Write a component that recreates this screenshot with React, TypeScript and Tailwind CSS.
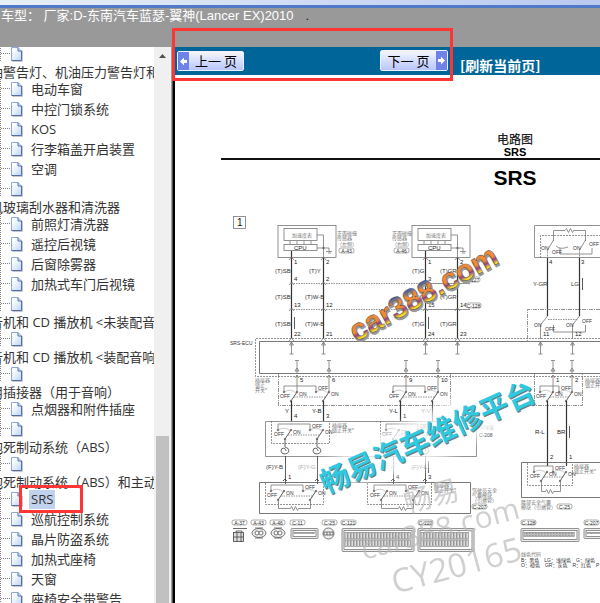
import clsx from 'clsx';

type Node = { label: string; group?: boolean; selected?: boolean };

const nodes: Node[] = [
    { label: '油警告灯、机油压力警告灯和', group: true },
    { label: '电动车窗' },
    { label: '中控门锁系统' },
    { label: 'KOS' },
    { label: '行李箱盖开启装置' },
    { label: '空调' },
    { label: '风玻璃刮水器和清洗器', group: true },
    { label: '前照灯清洗器' },
    { label: '遥控后视镜' },
    { label: '后窗除雾器' },
    { label: '加热式车门后视镜' },
    { label: '音机和 CD 播放机 <未装配音', group: true },
    { label: '音机和 CD 播放机 <装配音响', group: true },
    { label: '用插接器（用于音响）', group: true },
    { label: '点烟器和附件插座' },
    { label: '抱死制动系统（ABS）', group: true },
    { label: '抱死制动系统（ABS）和主动', group: true },
    { label: 'SRS', selected: true },
    { label: '巡航控制系统' },
    { label: '晶片防盗系统' },
    { label: '加热式座椅' },
    { label: '天窗' },
    { label: '座椅安全带警告' },
];

function PageIcon() {
    return (
        <svg width="24" height="20" viewBox="0 0 24 20" className="block shrink-0" aria-hidden="true">
            <defs>
                <linearGradient id="sheet" x1="0" y1="0" x2="1" y2="1">
                    <stop offset="0.2" stopColor="#fff" />
                    <stop offset="1" stopColor="#bcd6f5" />
                </linearGradient>
            </defs>
            <path d="M0.5 0V20M1 9.5H11" stroke="#808080" strokeDasharray="1 1" />
            <path d="M12.500 17.5H22.5V7" fill="none" stroke="#c8c8c8" />
            <path d="M11.5 3.5H18L21.5 7V16.5H11.5Z" fill="url(#sheet)" stroke="#8fa9dc" />
            <path d="M18 3.5V7H21.5V16.5H11.5" fill="none" stroke="#536db0" />
        </svg>
    );
}

function TreeItem({ node }: { node: Node }) {
    if (node.group) {
        return (
            <li className="h-[35px]">
                <div className="h-[18px] overflow-hidden"><PageIcon /></div>
                <a href="#" className="-ml-[10px] block h-[17px] leading-[20px]">{node.label}</a>
            </li>
        );
    }
    return (
        <li className="relative flex h-5 items-center">
            <PageIcon />
            <a href="#" className={clsx('ml-[5px] px-[2px] leading-[19px]', node.selected && 'bg-[#c1d2ee]')}>
                {node.label}
            </a>
            {node.selected && (
                <div className="pointer-events-none absolute -top-1 left-[19px] z-10 h-7 w-16 border-3 border-[#fc3535]" />
            )}
        </li>
    );
}

function T({ x, y, s = 6, c = '#777', children }: { x: number; y: number; s?: number; c?: string; children: string }) {
    return <text x={x} y={y} fontSize={s} fill={c} stroke="none">{children}</text>;
}

function Pill({ x, y, w = 15, children }: { x: number; y: number; w?: number; children: string }) {
    return (
        <g>
            <rect x={x} y={y - 5} width={w} height="5" rx="2" fill="#fff" strokeWidth="0.6" />
            <text x={x + w / 2} y={y - 0.5} fontSize="5" fill="#333" stroke="none" textAnchor="middle">{children}</text>
        </g>
    );
}

// pair of ganged contacts, x/y is the first pivot
function Switches({ x, y, gap = 32 }: { x: number; y: number; gap?: number }) {
    return (
        <g>
            {[x, x + gap].map((px) => (
                <g key={px}>
                    <path d={`M${px} ${y}L${px + 6} ${y - 9}`} stroke="#333" />
                    <path d={`M${px - 7} ${y - 9}Q${px} ${y - 13} ${px + 5} ${y - 8}`} strokeWidth="0.4" />
                    <circle cx={px} cy={y} r="0.8" fill="#222" />
                    <circle cx={px + 6} cy={y - 9} r="0.8" fill="#222" />
                    <circle cx={px - 7} cy={y - 9} r="0.8" fill="#222" />
                    <T x={px + 8} y={y - 5} s={5} c="#333">ON</T>
                </g>
            ))}
            <path d={`M${x - 7} ${y - 9}v-6h${gap}v6`} />
            <path d={`M${x + 3} ${y - 4}h${gap}`} strokeDasharray="1.5 1" />
            <T x={x - 11} y={y - 3} s={5} c="#333">OFF</T>
            <T x={x + gap - 5} y={y - 11} s={5} c="#333">OFF</T>
        </g>
    );
}

function Sensor({ x, pins }: { x: number; pins: string[][] }) {
    return (
        <g>
            <rect x={x} y="225.5" width="58" height="32" />
            <rect x={x + 6} y="228.5" width="33" height="12" />
            <rect x={x + 6} y="244.5" width="33" height="6" />
            <path d={`M${x + 12} 241v3M${x + 19} 241v3M${x + 26} 241v3M${x + 33} 241v3`} />
            <path d={`M${x + 39} 235h6.500V258M${x + 39} 248h12v3M${x + 48} 251.500h6M${x + 50} 253h3`} />
            <circle cx={x + 45.5} cy="248" r="0.8" fill="#222" />
            <T x={x + 14} y={237} s={5}>加速度表</T>
            <T x={x + 16} y={250} s={6} c="#222">CPU</T>
            <path d={`M${x + 13.5} 251V338M${x + 45.5} 258V338`} stroke="#333" strokeWidth="1.2" />
            <path d={`M${x + 13} 283.500H470M${x + 13} 309.500H470`} strokeDasharray="1.5 1" />
            {pins.map((row, i) => {
                const y = [264, 281, 307, 336][i];
                return (
                    <g key={i}>
                        <T x={x + 16} y={y} c="#222">{row[0]}</T>
                        <T x={x + 48} y={y} c="#222">{row[1]}</T>
                    </g>
                );
            })}
            {[258, 283, 309, 339].map((y) => (
                <path key={y} d={`M${x + 11} ${y + 2}l2.500 -3l2.500 3M${x + 43} ${y + 2}l2.500 -3l2.500 3`} />
            ))}
        </g>
    );
}

function Plug({ x, w, h, rows = 2 }: { x: number; w: number; h: number; rows?: number }) {
    const cols = Array.from({ length: Math.floor((w - 6) / 3) }, (_, i) => x + 3 + i * 3);
    return (
        <g stroke="#777">
            <rect x={x} y="528.5" width={w} height={h} rx="1" fill="#eee" />
            <rect x={x + 2} y="530.5" width={w - 4} height={h - 4} fill="#fff" />
            {Array.from({ length: rows }, (_, r) => {
                const rh = (h - 8) / rows;
                return cols.map((cx) => (
                    <rect key={`${r}-${cx}`} x={cx} y={532.5 + r * rh} width="2.500" height={rh - 1} strokeWidth="0.6" fill="#ddd" />
                ));
            })}
        </g>
    );
}

function CircuitDiagram() {
    return (
        <svg viewBox="175 75 425 528" className="block w-full font-['Liberation_Sans','Noto_Sans_CJK_SC',sans-serif]" role="img" aria-label="SRS 电路图">
            <defs>
                <linearGradient id="rainbow" x1="0" y1="0" x2="0" y2="1">
                    <stop offset="0.2" stopColor="#2f62b0" />
                    <stop offset="0.38" stopColor="#f18a35" />
                    <stop offset="0.56" stopColor="#f18a35" />
                    <stop offset="0.66" stopColor="#914086" />
                    <stop offset="0.78" stopColor="#f6dc1d" />
                </linearGradient>
                <filter id="fade" x="-20%" y="-20%" width="140%" height="140%">
                    <feGaussianBlur stdDeviation="5" />
                </filter>
            </defs>
            <text x="515" y="144" fontSize="12" fontWeight="500" textAnchor="middle" fill="#222">电路图</text>
            <text x="515" y="156" fontSize="11" fontWeight="bold" textAnchor="middle">SRS</text>
            <path d="M221 159H600" stroke="#111" strokeWidth="2" />
            <text x="515" y="185" fontSize="21" fontWeight="bold" textAnchor="middle">SRS</text>

            <g fill="none" stroke="#777" strokeWidth="0.8">
                <rect x="233.5" y="216.500" width="12" height="12" />
                <T x={237} y={226} s={10} c="#111">1</T>

                <Sensor x={278} pins={[['1', '2'], ['4', '2'], ['13', '12'], ['22', '21']]} />
                <Sensor x={412} pins={[['1', '2'], ['3', '1'], ['15', '14'], ['24', '23']]} />
                {[[338, '左侧', 'A-43'], [393, '右侧', 'A-46']].map(([x, side, code]) => (
                    <g key={code}>
                        <T x={+x - 1} y={235} s={5}>正面碰撞</T>
                        <T x={+x - 1} y={240} s={5}>传感器</T>
                        <T x={+x - 1} y={246} s={5}>{`（${side}）`}</T>
                        <Pill x={+x + 1} y={253}>{String(code)}</Pill>
                    </g>
                ))}
                {[273, 299, 326].map((y, i) => (
                    <g key={y}>
                        <T x={275} y={y} c="#333">(T)SB</T>
                        <T x={i ? 305 : 309} y={y} c="#333">{i ? '(T)W-B' : '(T)Y'}</T>
                        <T x={412} y={y} c="#333">(T)G</T>
                        <T x={440} y={y} c="#333">(T)GR</T>
                    </g>
                ))}
                <path d="M294.500 317v12M428.500 317v12M582.500 278v12M569.500 426v12M428.500 461v12" stroke="#333" />
                <Pill x={465} y={282}>C-127</Pill>
                <Pill x={466} y={308}>C-128</Pill>

                {/* right hand igniter */}
                <path d="M600 225.500H534.500V257.500H600" />
                <path d="M540.500 258V235.500H600M547.500 251.500V258M579.500 251.500V258" strokeDasharray="2 1" />
                <path d="M553.500 241V230.500H565l1.500 -2l2 4l2 -4l2 4l1 -2H585.500V241M560 248v6h32v-6" />
                <path d="M547 251L553.500 240M579 251L585.500 240M556 246Q560 250 568 247" />
                <T x={541} y={250} s={5} c="#333">ON</T>
                <T x={573} y={250} s={5} c="#333">ON</T>
                <T x={552} y={254} s={5} c="#333">OFF</T>
                <T x={589} y={246} s={5} c="#333">OFF</T>
                <path d="M547.500 258V316M579.500 258V316" stroke="#333" strokeWidth="1.200" />
                <T x={549} y={264} c="#222">4</T>
                <T x={581} y={264} c="#222">3</T>
                <T x={533} y={286} c="#333">Y-GR</T>
                <T x={571} y={286} c="#333">LG</T>
                <path d="M600 309.500H527.500V341" strokeDasharray="4 1 1 1" />
                <path d="M540.500 325L547.500 316M572.500 325L579.500 316M540.500 325V339M572.500 325V339M553.500 325v7h32v-7" />
                <path d="M548 319.500H577" strokeDasharray="1.500 1" />
                <T x={534} y={327} s={5} c="#333">ON</T>
                <T x={566} y={327} s={5} c="#333">ON</T>
                <T x={545} y={331} s={5} c="#333">OFF</T>
                <T x={582} y={323} s={5} c="#333">OFF</T>
                <T x={543} y={336} c="#222">11</T>
                <T x={575} y={336} c="#222">12</T>

                {/* ECU */}
                <T x={230} y={345} s={5} c="#333">SRS-ECU</T>
                <path d="M600 338.500H255.500V376.500H600" strokeDasharray="2 1" />
                <path d="M600 341.500H259.500V373.500H600" stroke="#555" />
                {[291, 323, 425, 457, 540, 572].map((x) => (
                    <path key={x} d={`M${x}.500 341V354m-2 0h4m-4 -9l2 -3l2 3z`} />
                ))}
                {[297, 329, 406, 438, 553, 572].map((x, i) => (
                    <g key={x}>
                        <path d={`M${x - 2} 360.500h4m-2 0V373m-2 -2l2 -3l2 3zM${x - 2} 378l2 -3l2 3M${x} 375V392`} />
                        <T x={x + 3} y={382} c="#222">{['5', '6', '9', '10', '1', '2'][i]}</T>
                    </g>
                ))}

                {/* connector lock switches under the ECU */}
                <path d="M278.500 374V405.500H450.500V374M534.500 374V405.500H582.500V374" strokeDasharray="4 1 1 1" />
                <Switches x={291} y={401} />
                <Switches x={400} y={401} />
                <Switches x={547} y={401} gap={19} />
                <path d="M291.500 401V421M323.500 401V421M400.500 401V421M432.500 401V421M547.500 401V466M566.500 401V466" stroke="#333" strokeWidth="1.200" />
                <T x={255} y={382} s={5}>插接器</T>
                <T x={255} y={387} s={5}>锁止</T>
                <T x={255} y={392} s={5}>开关*</T>
                <T x={585} y={382} s={5}>插接器</T>
                <T x={585} y={387} s={5}>锁止开关</T>
                <T x={285} y={413} c="#222">Y</T>
                <T x={312} y={413} c="#222">Y-B</T>
                <T x={389} y={413} c="#222">Y-L</T>
                <T x={421} y={413} c="#999">Y-V</T>
                <T x={294} y={418} c="#222">4</T>
                <T x={326} y={418} c="#222">3</T>
                <T x={403} y={418} c="#222">1</T>

                {/* clock spring */}
                <path d="M265.500 421.500H476.500V456.500H265.500Z" />
                <path d="M271.500 421V443.500H329.500V421M380.500 421V443.500H438.500V421" strokeDasharray="2 1" />
                <Switches x={285} y={439} />
                <Switches x={393} y={439} />
                {[285, 317, 393, 425].map((x) => (
                    <g key={x}>
                        <path d={`M${x} 439V447q4 1 4 4q-1 3 -4 3q-4 0 -4 -3q0 -3 3 -3q2 1 2 3`} stroke="#444" />
                        <path d={`M${x}.500 456V484M${x - 2} 481l2 -2l2 2`} stroke="#333" />
                    </g>
                ))}
                <T x={332} y={427} s={5}>插接器</T>
                <T x={332} y={432} s={5}>锁止开关*</T>
                <T x={479} y={429} s={5} c="#bbb">钟弹簧</T>
                <T x={479} y={437} s={5} c="#333">C-208</T>
                <T x={266} y={469} c="#333">(F)Y-B</T>
                <T x={298} y={469} c="#aaa">(F)Y-G</T>
                <T x={378} y={469} c="#aaa">(F)Y-R</T>
                <T x={411} y={469} c="#555">(F)Y-L</T>
                <T x={288} y={479} c="#222">1</T>
                <T x={396} y={479} c="#222">4</T>
                <T x={428} y={479} c="#222">3</T>

                {/* driver air bag module */}
                <path d="M259.500 482.500H470.500V513.500H259.500Z" stroke="#555" />
                <path d="M265.500 483V504.500H323.500V483M367.500 483V504.500H431.500V483" strokeDasharray="2 1" />
                <Switches x={278} y={500} />
                <Switches x={381} y={500} />
                <path d="M278.500 500V508.500h12l1 -2l2 4l2 -4l2 4l1 -2H310.500V500" />
                <path d="M381.500 500V508.500h17l1 -2l2 4l2 -4l2 4l1 -2H413.500V500" />
                <T x={434} y={487} s={5}>插接器</T>
                <T x={434} y={492} s={5}>锁止开关*</T>
                <T x={472} y={492} s={5}>驾驶员安全</T>
                <T x={472} y={497} s={5}>气囊模块</T>
                <T x={472} y={502} s={5}>（引燃管）</T>
                <Pill x={472} y={509}>C-207</Pill>

                {/* waist air bag module */}
                <T x={535} y={434} c="#222">R-L</T>
                <T x={557} y={434} c="#222">BR</T>
                <T x={550} y={459} c="#222">2</T>
                <T x={569} y={459} c="#222">1</T>
                <path d="M600 462.500H521.500V497.500H600" stroke="#555" />
                <path d="M527.500 463V485.500H572.500V463" strokeDasharray="2 1" />
                <Switches x={541} y={481} gap={19} />
                <path d="M541.500 481V491.500h4l1 -2l2 4l2 -4l2 4l1 -2H560.500V481" />
                <T x={574} y={468} s={5}>插接器</T>
                <T x={574} y={473} s={5}>锁止开关*</T>
                <T x={521} y={504} s={5}>腰部安全气囊</T>
                <T x={521} y={509} s={5}>模块（引燃管）</T>
                <Pill x={557} y={509}>C-25</Pill>

                {/* connectors */}
                {[[232, 'A-37'], [251, 'A-43'], [270, 'A-46'], [290, 'C-11'], [322, 'C-25'], [341, 'C-121'], [418, 'C-122'], [521, 'C-128'], [584, 'C-207']].map(([x, code]) => (
                    <Pill key={code} x={+x} y={525}>{String(code)}</Pill>
                ))}
                <path d="M233 528.500h14M236 533v-2h6v2" stroke="#444" />
                <rect x="233.500" y="532.500" width="10" height="9" fill="#ddd" stroke="#444" />
                <path d="M233 537h11M237 533v9M241 533v9" stroke="#444" />
                {[259, 278].map((x) => (
                    <g key={x} stroke="#555">
                        <ellipse cx={x} cy="533" rx="7" ry="4.500" fill="#eee" />
                        <path d={`M${x - 4} 528h8M${x - 4} 538h8`} />
                        <circle cx={x - 2} cy="533" r="2" fill="#fff" />
                        <circle cx={x + 2} cy="533" r="2" fill="#fff" />
                    </g>
                ))}
                <Plug x={291} w={27} h={10} rows={1} />
                <circle cx="328.500" cy="533.500" r="5.500" fill="#eee" stroke="#555" />
                <path d="M324 532h9v3h-9zM327 532v3M330 532v3" stroke="#555" />
                <Plug x={342} w={72} h={23} />
                <Plug x={418} w={56} h={23} />
                <Plug x={521} w={58} h={13} />
                <Plug x={584} w={30} h={10} rows={1} />
                <T x={521} y={556} s={5}>线色代码</T>
                <T x={521} y={562} s={5} c="#333">B：黑色　LG：浅绿色　G：绿色　L</T>
                <T x={521} y={567} s={5} c="#333">O：橙色　GR：灰色　R：红色　P</T>
            </g>

            {/* watermarks */}
            <path d="M320 464L470 390L520 385L520 405L470 445L420 470L330 490Z" fill="#fff" opacity="0.75" filter="url(#fade)" />
            <g fill="#b8b8b8" opacity="0.65" className="font-['Open_Sans','Noto_Sans_CJK_SC',sans-serif]">
                <text fontSize="28" transform="translate(407 513) rotate(-15)">畅易</text>
                <text fontSize="30" transform="translate(364 560) rotate(-15)">car388.com</text>
                <text fontSize="33" transform="translate(395 594) rotate(-15)">CY20165</text>
            </g>
            <g fontWeight="bold" fontSize="30" strokeLinejoin="round">
                <text fill="#999" stroke="#999" transform="translate(357 344) rotate(-29)">car388.com</text>
                <text fill="url(#rainbow)" stroke="#444" strokeWidth="0.400" transform="translate(356 342) rotate(-29)">car388.com</text>
            </g>
            <g fontWeight="bold" fontSize="29">
                <text fill="#777" transform="translate(327 495) rotate(-24)">畅易汽车维修平台</text>
                <text fill="#2fc9e2" transform="translate(326 494) rotate(-24)">畅易汽车维修平台</text>
            </g>
        </svg>
    );
}

function Arrow({ left }: { left?: boolean }) {
    return (
        <span className="flex w-[11px] shrink-0 items-center justify-center self-stretch bg-[#6f82e8]">
            <svg width="9" height="9" viewBox="0 0 9 9" className={clsx(left && 'rotate-180')} aria-hidden="true">
                <path d="M1 3h3V0.500L8 4.500L4 8.500V6H1z" fill="#fff" />
            </svg>
        </span>
    );
}

export default function App() {
    return (
        <div className="flex h-screen flex-col overflow-hidden bg-white font-['Open_Sans','Noto_Sans_CJK_SC',sans-serif] text-[13px] text-[#333]">
            <div className="h-[5px] shrink-0 bg-linear-to-r from-[#e8effb] to-[#b9c9ef]" />
            <div className="h-[3px] shrink-0 bg-[#5079c8]" />
            <header className="h-[39px] shrink-0 overflow-hidden bg-[#999] pl-px font-['Liberation_Sans','Noto_Sans_CJK_SC',sans-serif] leading-4 whitespace-pre text-white">
                车型： 厂家:D-东南汽车蓝瑟-翼神(Lancer EX)2010<span className="ml-3 text-[#222]">.</span>
            </header>

            <div className="flex min-h-0 flex-1">
                <nav className="w-[154px] shrink-0 overflow-hidden">
                    <ul className="-mt-[3px] whitespace-nowrap">
                        {nodes.map((node, i) => <TreeItem key={i} node={node} />)}
                    </ul>
                </nav>
                <div className="flex w-[17px] shrink-0 flex-col bg-[#f0f0f0] px-[2px]" aria-hidden="true">
                    <div className="flex h-[70%] justify-center pt-[7px]">
                        <svg width="7" height="4" viewBox="0 0 7 4"><path d="M0 4L3.500 0L7 4z" fill="#505050" /></svg>
                    </div>
                    <div className="flex-1 bg-[#c1c1c1]" />
                </div>
                <div className="w-1 shrink-0 border-r-2 border-l border-r-black border-l-[#a0a0a0] bg-[#555]" />

                <main className="relative min-w-0 flex-1">
                    <div className="flex h-7 items-start bg-[#006699] pl-[2px] font-['Noto_Sans_CJK_SC',sans-serif]">
                        <div className="flex w-[271px] items-end justify-between pt-[3px]">
                            <button type="button" className="flex h-5 w-[67px] items-center rounded-xs border border-[#f0f0ff] bg-linear-to-b from-[#f4f6ff] to-[#b9c6fa] text-black">
                                <Arrow left />
                                <span className="flex-1 text-center leading-4">上一 页</span>
                            </button>
                            <button type="button" className="flex h-[21px] w-[68px] items-center rounded-xs border border-[#f0f0ff] bg-linear-to-b from-[#f4f6ff] to-[#b9c6fa] text-black">
                                <span className="flex-1 text-center leading-4">下一 页</span>
                                <Arrow />
                            </button>
                        </div>
                        <a href="#" className="ml-3 pt-2 text-sm font-bold whitespace-nowrap text-white">[刷新当前页]</a>
                    </div>
                    <CircuitDiagram />
                    <div className="pointer-events-none absolute -top-[19px] -left-[3px] h-[53px] w-[281px] border-3 border-[#fc3535]" />
                </main>
            </div>
        </div>
    );
}
